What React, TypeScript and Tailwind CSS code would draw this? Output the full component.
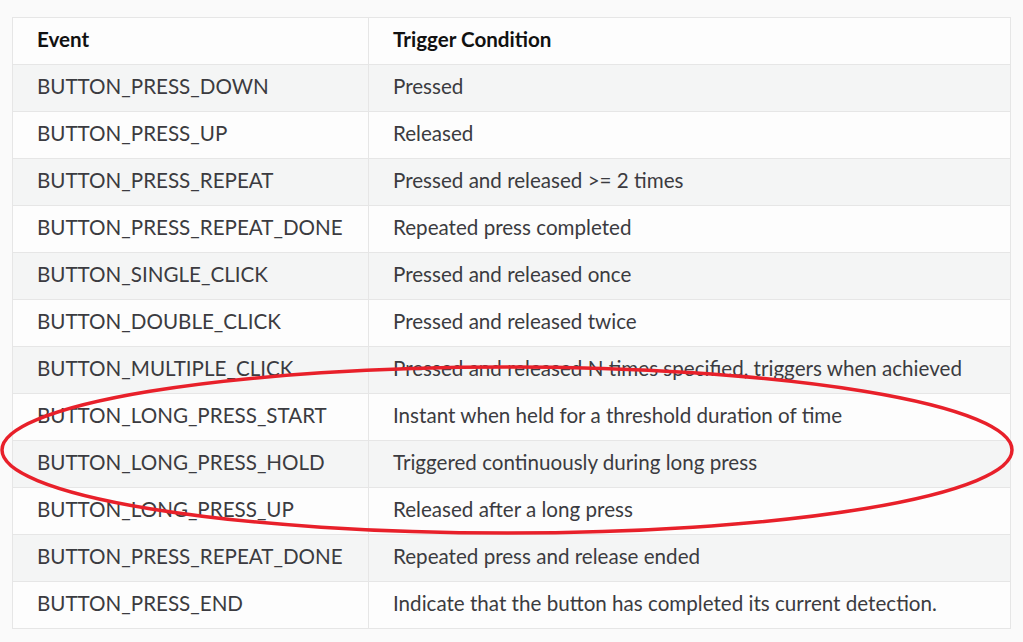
import React from 'react'

const rows: [string, string][] = [
  ['BUTTON_PRESS_DOWN', 'Pressed'],
  ['BUTTON_PRESS_UP', 'Released'],
  ['BUTTON_PRESS_REPEAT', 'Pressed and released >= 2 times'],
  ['BUTTON_PRESS_REPEAT_DONE', 'Repeated press completed'],
  ['BUTTON_SINGLE_CLICK', 'Pressed and released once'],
  ['BUTTON_DOUBLE_CLICK', 'Pressed and released twice'],
  ['BUTTON_MULTIPLE_CLICK', 'Pressed and released N times specified, triggers when achieved'],
  ['BUTTON_LONG_PRESS_START', 'Instant when held for a threshold duration of time'],
  ['BUTTON_LONG_PRESS_HOLD', 'Triggered continuously during long press'],
  ['BUTTON_LONG_PRESS_UP', 'Released after a long press'],
  ['BUTTON_PRESS_REPEAT_DONE', 'Repeated press and release ended'],
  ['BUTTON_PRESS_END', 'Indicate that the button has completed its current detection.'],
]

export default function App() {
  return (
    <div className="relative w-[1023px] h-[642px] overflow-hidden bg-[#fafafa] font-['Lato','Liberation_Sans',sans-serif]">
      <div className="pl-[12px] pt-[17px]">
        <table className="w-[999px] border-collapse table-fixed text-[20.6px] text-[#3b3b40]">
          <colgroup>
            <col className="w-[356px]" />
            <col />
          </colgroup>
          <thead>
            <tr className="h-[47px] bg-[#fdfdfd]">
              <th className="border border-[#e6e6e6] pl-[24px] pb-[4px] text-left font-bold text-[#111]">Event</th>
              <th className="border border-[#e6e6e6] pl-[24px] pb-[4px] text-left font-bold text-[#111]">Trigger Condition</th>
            </tr>
          </thead>
          <tbody>
            {rows.map(([ev, cond], i) => (
              <tr key={i} className={i % 2 === 0 ? 'h-[47px] bg-[#f4f5f5]' : 'h-[47px] bg-[#fdfdfd]'}>
                <td className="border border-[#e6e6e6] pl-[24px] pb-[4px]">{ev}</td>
                <td className="border border-[#e6e6e6] pl-[24px] pb-[4px]">{cond}</td>
              </tr>
            ))}
          </tbody>
        </table>
      </div>

      {/* hand-drawn highlight */}
      <svg className="absolute left-0 top-0 pointer-events-none" width="1023" height="642">
        <ellipse cx="507" cy="450" rx="505" ry="83" fill="none" stroke="#e8202a" strokeWidth="3.5" />
      </svg>
    </div>
  )
}
